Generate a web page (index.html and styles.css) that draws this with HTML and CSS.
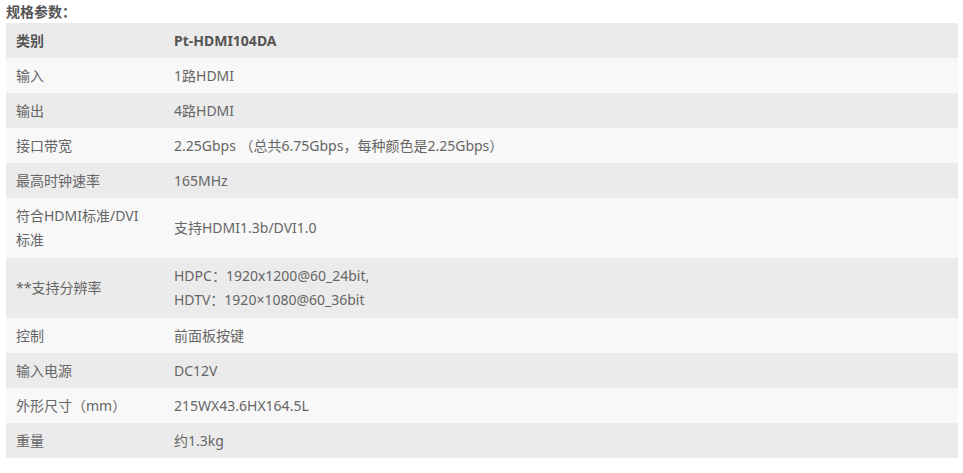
FILE: index.html
```html
<!DOCTYPE html>
<html lang="zh-CN">
<head>
<meta charset="utf-8">
<title>规格参数</title>
<link rel="stylesheet" href="styles.css">
</head>
<body>
<div class="spec">
  <div class="spec-title">规格参数：</div>
  <table class="spec-table">
    <tbody>
      <tr class="row-head"><td class="c1">类别</td><td class="c2">Pt-HDMI104DA</td></tr>
      <tr class="row-light"><td class="c1">输入</td><td class="c2">1路HDMI</td></tr>
      <tr class="row-dark"><td class="c1">输出</td><td class="c2">4路HDMI</td></tr>
      <tr class="row-light"><td class="c1">接口带宽</td><td class="c2">2.25Gbps （总共6.75Gbps，每种颜色是2.25Gbps）</td></tr>
      <tr class="row-dark"><td class="c1">最高时钟速率</td><td class="c2">165MHz</td></tr>
      <tr class="row-light row-tall"><td class="c1">符合HDMI标准/DVI标准</td><td class="c2">支持HDMI1.3b/DVI1.0</td></tr>
      <tr class="row-dark row-tall"><td class="c1">**支持分辨率</td><td class="c2">HDPC：1920x1200@60_24bit,<br>HDTV：1920×1080@60_36bit</td></tr>
      <tr class="row-light"><td class="c1">控制</td><td class="c2">前面板按键</td></tr>
      <tr class="row-dark"><td class="c1">输入电源</td><td class="c2">DC12V</td></tr>
      <tr class="row-light"><td class="c1">外形尺寸（mm）</td><td class="c2">215WX43.6HX164.5L</td></tr>
      <tr class="row-dark"><td class="c1">重量</td><td class="c2">约1.3kg</td></tr>
    </tbody>
  </table>
</div>
</body>
</html>
```
FILE: styles.css
```css
html, body {
  margin: 0;
  padding: 0;
  background: #ffffff;
}
body {
  padding: 3px 5px 0 6px;
  font-family: "Noto Sans", "Noto Sans CJK SC", sans-serif;
  font-size: 14px;
  color: #666666;
}
.spec-title {
  font-weight: bold;
  color: #555555;
  line-height: 17px;
  height: 20px;
  font-size: 14px;
}
.spec-table {
  width: 952px;
  border-collapse: collapse;
  border-spacing: 0;
}
.spec-table td {
  padding: 6px 10px 5px;
  line-height: 24px;
  vertical-align: middle;
  text-align: left;
}
.spec-table .row-tall td {
  padding: 6px 10px;
}
.spec-table .c1 {
  width: 132px;
  padding-right: 16px;
}
.spec-table .row-tall .c1 {
  padding-right: 16px;
}
.row-head {
  background: #ebebeb;
  font-weight: bold;
  color: #555555;
}
.row-light {
  background: #f8f8f8;
}
.row-dark {
  background: #ebebeb;
}
```
